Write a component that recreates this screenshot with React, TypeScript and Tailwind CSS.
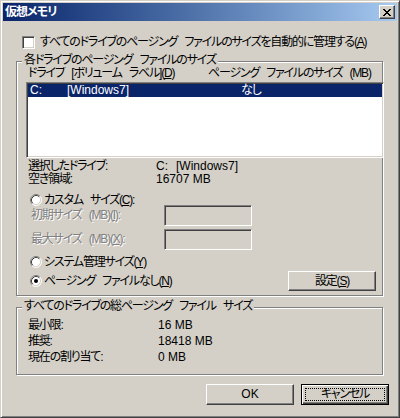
import type { ReactNode } from 'react'

const raised = 'border border-t-white border-l-white border-r-[#404040] border-b-[#404040] shadow-[inset_-1px_-1px_0_#808080]'
const sunken = 'border border-t-[#808080] border-l-[#808080] border-r-white border-b-white shadow-[inset_1px_1px_0_#404040,inset_-1px_-1px_0_#d4d0c8]'
const dim = 'text-[#808080] [text-shadow:1px_1px_0_#fff]'
const latin = 'tracking-normal [word-spacing:normal]'

function Radio({ checked }: { checked?: boolean }) {
  return (
    <svg width="12" height="12" viewBox="0 0 12 12" className="shrink-0">
      <circle cx="6" cy="6" r="5" fill="#fff" />
      <path d="M2.11 9.89A5.5 5.5 0 0 1 9.89 2.11" fill="none" stroke="#808080" />
      <path d="M9.89 2.11A5.5 5.5 0 0 1 2.11 9.89" fill="none" stroke="#fff" />
      <path d="M2.82 9.18A4.5 4.5 0 0 1 9.18 2.82" fill="none" stroke="#404040" />
      <path d="M9.18 2.82A4.5 4.5 0 0 1 2.82 9.18" fill="none" stroke="#d4d0c8" />
      {checked && <circle cx="6" cy="6" r="2" fill="#000" />}
    </svg>
  )
}

function CloseGlyph() {
  // classic 8x7 pixel X
  const px = [
    [0, 0], [1, 0], [6, 0], [7, 0],
    [1, 1], [2, 1], [5, 1], [6, 1],
    [2, 2], [3, 2], [4, 2], [5, 2],
    [3, 3], [4, 3],
    [2, 4], [3, 4], [4, 4], [5, 4],
    [1, 5], [2, 5], [5, 5], [6, 5],
    [0, 6], [1, 6], [6, 6], [7, 6],
  ]
  return (
    <svg width="8" height="7" viewBox="0 0 8 7" shapeRendering="crispEdges">
      {px.map(([x, y]) => <rect key={`${x}-${y}`} x={x} y={y} width="1" height="1" fill="#000" />)}
    </svg>
  )
}

function Group({ label, h, children }: { label: string; h: string; children: ReactNode }) {
  return (
    <div className={`relative w-[367px] border border-[#808080] shadow-[1px_1px_0_#fff,inset_1px_1px_0_#fff] ${h}`}>
      <span className="absolute left-[5px] top-[-9px] bg-[#d4d0c8] px-[2px] leading-[14px] whitespace-nowrap">{label}</span>
      {children}
    </div>
  )
}

export default function App() {
  return (
    <div className="w-[400px] h-[418px] bg-[#d4d0c8] border border-t-[#d4d0c8] border-l-[#d4d0c8] border-r-[#404040] border-b-[#404040] shadow-[inset_1px_1px_0_#fff,inset_-1px_-1px_0_#808080] p-[2px] flex flex-col text-[12px] tracking-[-1.2px] [word-spacing:5px] text-black font-['Liberation_Sans','Noto_Sans_CJK_JP',sans-serif] [font-feature-settings:'palt'] select-none">
      {/* title bar */}
      <div className="h-[18px] shrink-0 flex items-center bg-linear-to-r from-[#0a246a] to-[#a6caf0]">
        <span className="pl-[2px] text-white font-bold leading-[18px] tracking-[-1px]">仮想メモリ</span>
        <div className={`ml-auto mr-[2px] w-[16px] h-[14px] bg-[#d4d0c8] flex items-center justify-center ${raised}`}>
          <CloseGlyph />
        </div>
      </div>

      <div className="flex flex-col pl-[13px]">
        <div className="mt-[15px] ml-[6px] flex items-center gap-[5px] h-[13px]">
          <div className={`w-[13px] h-[13px] shrink-0 bg-white ${sunken}`} />
          <span className="leading-[13px] whitespace-nowrap">すべてのドライブのページング ファイルのサイズを自動的に管理する(<u>A</u>)</span>
        </div>

        <div className="mt-[12px]">
          <Group label="各ドライブのページング ファイルのサイズ" h="h-[235px]">
            <div className="flex flex-col">
              <div className="mt-[5px] ml-[11px] flex h-[13px] leading-[13px] whitespace-nowrap">
                <span className="w-[180px] shrink-0">ドライブ [ボリューム ラベル](<u>D</u>)</span>
                <span>ページング ファイルのサイズ (MB)</span>
              </div>

              <div className={`mt-[2px] ml-[9px] w-[358px] h-[76px] bg-white p-[1px] ${sunken}`}>
                <div className={`h-[13px] bg-[#0a246a] text-white flex leading-[13px] pl-[2px] whitespace-nowrap`}>
                  <span className={`w-[37px] shrink-0 ${latin}`}>C:</span>
                  <span className={`w-[174px] shrink-0 ${latin}`}>[Windows7]</span>
                  <span>なし</span>
                </div>
              </div>

              <div className="mt-[2px] ml-[11px] flex h-[13px] leading-[13px] whitespace-nowrap">
                <span className="w-[128px] shrink-0">選択したドライブ:</span>
                <span className={latin}><span className="inline-block w-[20px]">C:</span>[Windows7]</span>
              </div>
              <div className="ml-[11px] flex h-[13px] leading-[13px] whitespace-nowrap">
                <span className="w-[128px] shrink-0">空き領域:</span>
                <span className={latin}>16707 MB</span>
              </div>

              <div className="mt-[8px] ml-[13px] flex items-center gap-[2px] h-[12px] whitespace-nowrap">
                <Radio />
                <span className="leading-[13px]">カスタム サイズ(<u>C</u>):</span>
              </div>

              <div className="-mt-[1px] ml-[14px] flex items-center h-[21px] whitespace-nowrap">
                <span className={`w-[133px] shrink-0 leading-[13px] ${dim}`}>初期サイズ (MB)(<u>I</u>):</span>
                <div className={`w-[88px] h-[21px] bg-[#d4d0c8] ${sunken}`} />
              </div>
              <div className="mt-[3px] ml-[14px] flex items-center h-[21px] whitespace-nowrap">
                <span className={`w-[133px] shrink-0 leading-[13px] ${dim}`}>最大サイズ (MB)(<u>X</u>):</span>
                <div className={`w-[88px] h-[21px] bg-[#d4d0c8] ${sunken}`} />
              </div>

              <div className="mt-[6px] ml-[13px] flex items-center gap-[2px] h-[12px] whitespace-nowrap">
                <Radio />
                <span className="leading-[13px]">システム管理サイズ(<u>Y</u>)</span>
              </div>

              <div className="mt-[3px] ml-[13px] mr-[6px] flex items-center h-[20px] whitespace-nowrap">
                <Radio checked />
                <span className="ml-[2px] leading-[13px]">ページング ファイルなし(<u>N</u>)</span>
                <div className={`ml-auto w-[88px] h-[20px] flex items-center justify-center leading-[13px] ${raised}`}>
                  設定(<u>S</u>)
                </div>
              </div>
            </div>
          </Group>
        </div>

        <div className="mt-[11px]">
          <Group label="すべてのドライブの総ページング ファイル サイズ" h="h-[68px]">
            <div className="mt-[9px] ml-[11px] flex flex-col whitespace-nowrap">
              <div className="flex h-[16px] items-center leading-[13px]">
                <span className="w-[130px] shrink-0">最小限:</span>
                <span className={latin}>16 MB</span>
              </div>
              <div className="flex h-[16px] items-center leading-[13px]">
                <span className="w-[130px] shrink-0">推奨:</span>
                <span className={latin}>18418 MB</span>
              </div>
              <div className="flex h-[16px] items-center leading-[13px]">
                <span className="w-[130px] shrink-0">現在の割り当て:</span>
                <span className={latin}>0 MB</span>
              </div>
            </div>
          </Group>
        </div>

        <div className="mt-[9px] pr-[8px] flex justify-end gap-[7px]">
          <div className={`w-[88px] h-[21px] flex items-center justify-center leading-[13px] ${raised} ${latin}`}>OK</div>
          <div className="relative w-[88px] h-[21px] border border-black shadow-[inset_1px_1px_0_#fff,inset_-1px_-1px_0_#404040,inset_-2px_-2px_0_#808080] flex items-center justify-center leading-[13px]">
            キャンセル
            <div className="absolute inset-[3px] border border-dotted border-black" />
          </div>
        </div>
      </div>
    </div>
  )
}
